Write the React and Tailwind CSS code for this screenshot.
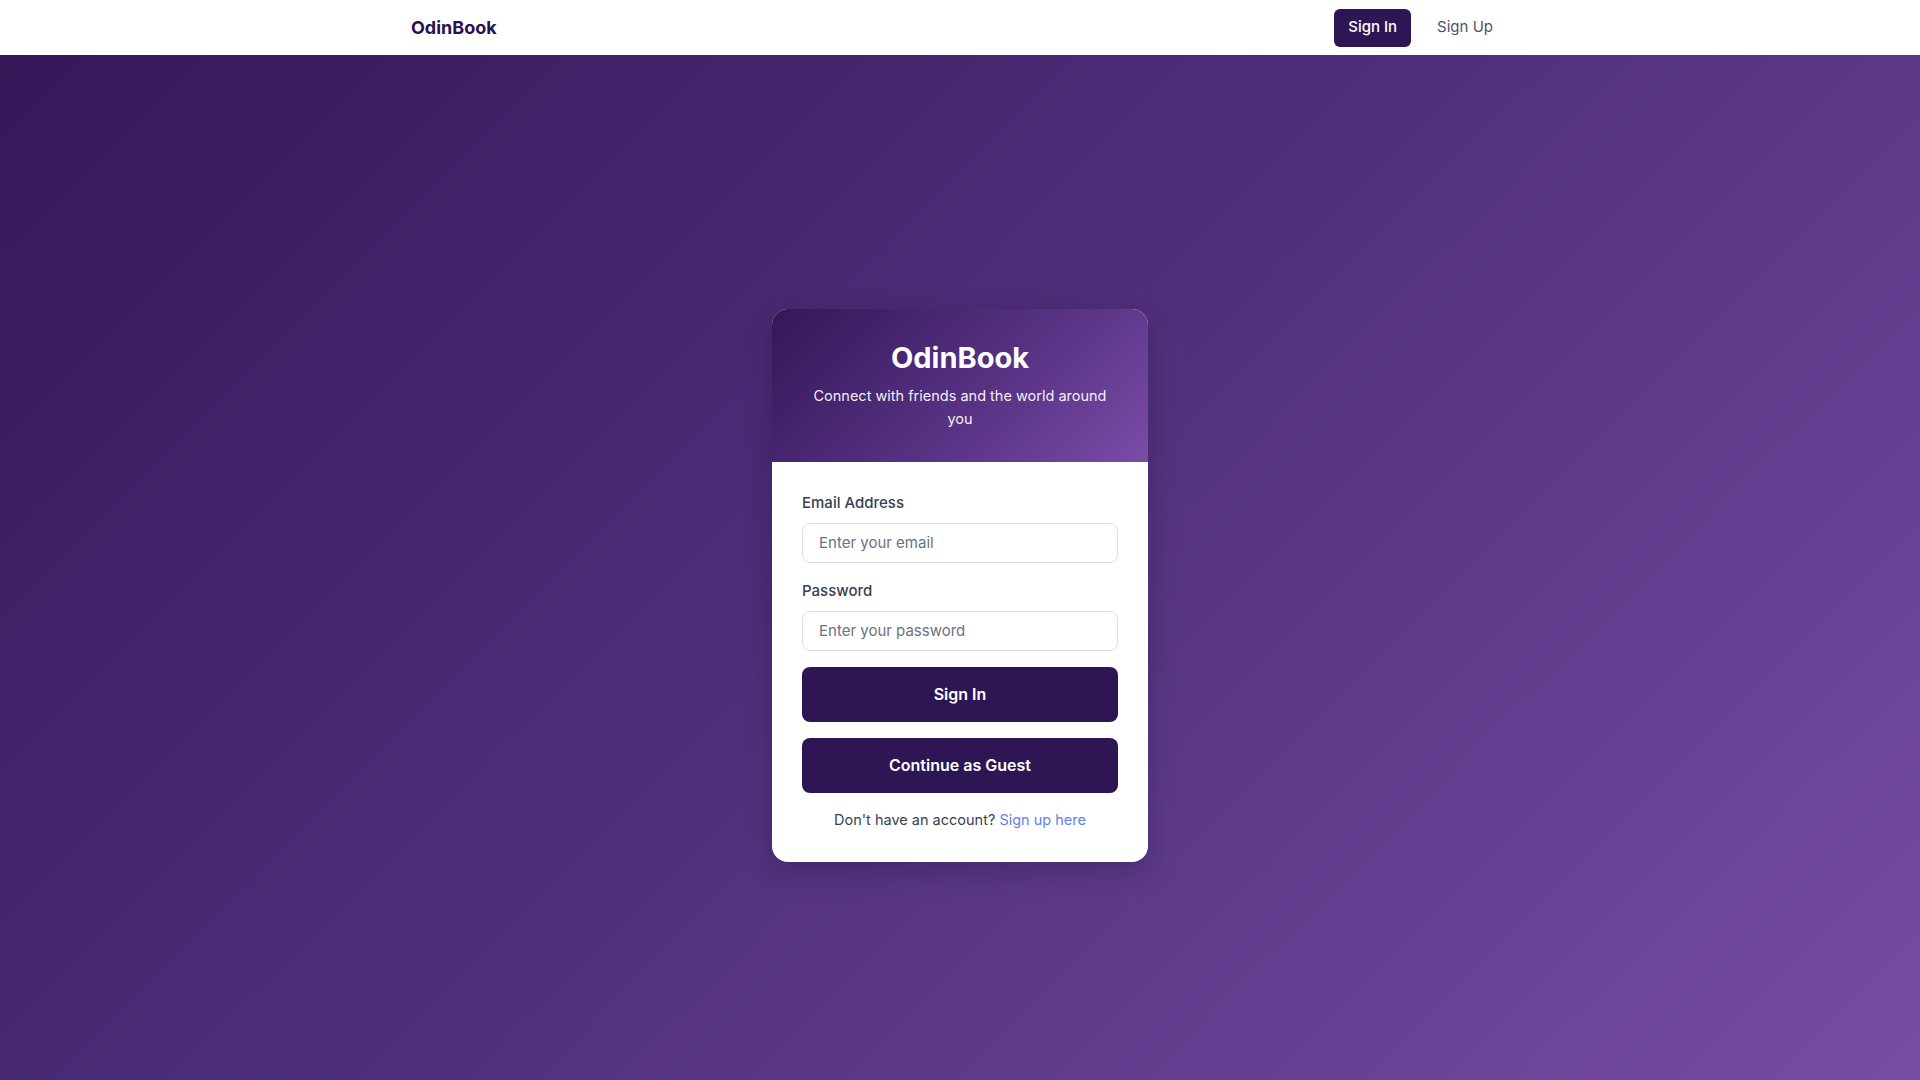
import React from 'react'

const Navbar = () => {
  return (
    <nav className="h-[55px] bg-white shadow-sm">
      <div className="max-w-6xl mx-auto h-full px-6 flex items-center justify-between">
        <div className="text-lg font-bold text-[#2a1150] pl-[3px]">OdinBook</div>
        <div className="flex items-center gap-[11px]">
          <button className="h-[38px] px-[14px] rounded-md bg-[#2e1654] text-white text-[15px] font-medium">
            Sign In
          </button>
          <button className="h-[38px] pl-[15px] pr-[19px] text-[15px] text-gray-600">
            Sign Up
          </button>
        </div>
      </div>
    </nav>
  )
}

const Field = ({ label, type, placeholder }) => (
  <div className="flex flex-col">
    <label className="text-[15px] leading-[22px] font-medium text-gray-700 mb-[9px]">{label}</label>
    <input
      type={type}
      placeholder={placeholder}
      className="h-[40px] px-4 rounded-lg border border-[#dedede] text-[15px] text-gray-800 placeholder:text-gray-500 outline-none"
    />
  </div>
)

const LoginCard = () => {
  return (
    <div className="w-[376px] rounded-2xl overflow-hidden bg-white shadow-[0_10px_30px_rgba(0,0,0,0.2)]">
      <div className="px-8 pt-[31px] pb-[32px] text-center text-white bg-[linear-gradient(135deg,#331858_0%,#5a3487_60%,#7a4ca6_100%)]">
        <h1 className="text-[29px] font-bold leading-9">OdinBook</h1>
        <p className="mt-[8px] text-[14.5px] leading-[23px] text-white/95">
          Connect with friends and the world around you
        </p>
      </div>
      <div className="px-[30px] pt-[30px] pb-[31px] flex flex-col">
        <div className="flex flex-col gap-[17px]">
          <Field label="Email Address" type="email" placeholder="Enter your email" />
          <Field label="Password" type="password" placeholder="Enter your password" />
        </div>
        <button className="mt-4 h-[55px] rounded-lg bg-[#2e1654] text-white text-[16px] font-semibold">
          Sign In
        </button>
        <button className="mt-4 h-[55px] rounded-lg bg-[#2e1654] text-white text-[16px] font-semibold">
          Continue as Guest
        </button>
        <p className="mt-4 text-center text-[14.5px] leading-[22px] text-gray-700">
          Don't have an account?{' '}
          <a href="#" className="text-[#667eea]">Sign up here</a>
        </p>
      </div>
    </div>
  )
}

const App = () => {
  return (
    <div className="min-h-screen flex flex-col font-['Inter',sans-serif]">
      <Navbar />
      <main className="h-[1025px] flex items-center justify-center pt-[35px] bg-[linear-gradient(135deg,#341858_0%,#50307d_50%,#774ca3_100%)]">
        <LoginCard />
      </main>
    </div>
  )
}

export default App
